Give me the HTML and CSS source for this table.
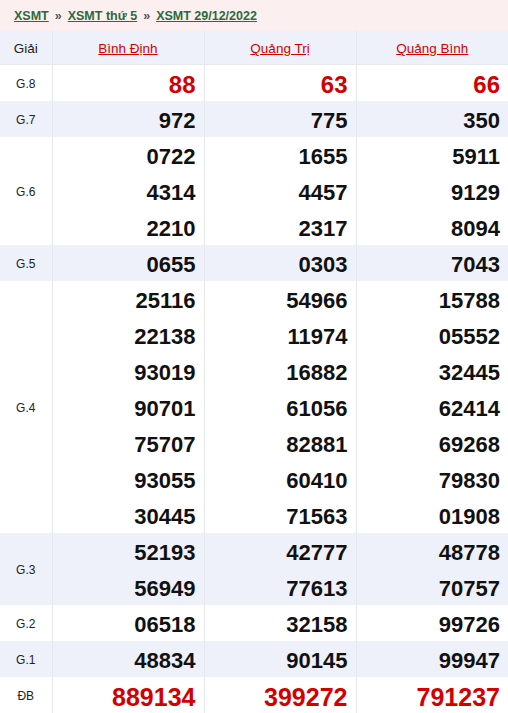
FILE: index.html
```html
<!DOCTYPE html>
<html>
<head>
<meta charset="utf-8">
<link rel="stylesheet" href="styles.css">
</head>
<body>
<div class="crumbs">
  <a href="#">XSMT</a><span class="sep">»</span><a href="#">XSMT thứ 5</a><span class="sep">»</span><a href="#">XSMT 29/12/2022</a>
</div>
<table class="kq">
  <colgroup><col class="c1"><col><col><col></colgroup>
  <thead>
    <tr><th>Giải</th><th><a href="#">Bình Định</a></th><th><a href="#">Quảng Trị</a></th><th><a href="#">Quảng Bình</a></th></tr>
  </thead>
  <tbody>
    <tr><td class="g">G.8</td><td class="red"><div>88</div></td><td class="red"><div>63</div></td><td class="red"><div>66</div></td></tr>
    <tr class="alt"><td class="g">G.7</td><td><div>972</div></td><td><div>775</div></td><td><div>350</div></td></tr>
    <tr><td class="g">G.6</td><td><div>0722</div><div>4314</div><div>2210</div></td><td><div>1655</div><div>4457</div><div>2317</div></td><td><div>5911</div><div>9129</div><div>8094</div></td></tr>
    <tr class="alt"><td class="g">G.5</td><td><div>0655</div></td><td><div>0303</div></td><td><div>7043</div></td></tr>
    <tr><td class="g">G.4</td>
      <td><div>25116</div><div>22138</div><div>93019</div><div>90701</div><div>75707</div><div>93055</div><div>30445</div></td>
      <td><div>54966</div><div>11974</div><div>16882</div><div>61056</div><div>82881</div><div>60410</div><div>71563</div></td>
      <td><div>15788</div><div>05552</div><div>32445</div><div>62414</div><div>69268</div><div>79830</div><div>01908</div></td></tr>
    <tr class="alt"><td class="g">G.3</td><td><div>52193</div><div>56949</div></td><td><div>42777</div><div>77613</div></td><td><div>48778</div><div>70757</div></td></tr>
    <tr><td class="g">G.2</td><td><div>06518</div></td><td><div>32158</div></td><td><div>99726</div></td></tr>
    <tr class="alt"><td class="g">G.1</td><td><div>48834</div></td><td><div>90145</div></td><td><div>99947</div></td></tr>
    <tr><td class="g">ĐB</td><td class="red db"><div>889134</div></td><td class="red db"><div>399272</div></td><td class="red db"><div>791237</div></td></tr>
  </tbody>
</table>
</body>
</html>
```
FILE: styles.css
```css
html, body {
  margin: 0;
  padding: 0;
  background: #fff;
  font-family: "Liberation Sans", Arial, sans-serif;
}
.crumbs {
  background: #fcefef;
  height: 31px;
  padding: 1px 0 0 14px;
  display: flex;
  align-items: center;
  font-size: 12.5px;
  font-weight: bold;
  box-sizing: border-box;
}
.crumbs a {
  color: #2b6a3e;
  text-decoration: underline;
}
.crumbs .sep {
  color: #555;
  margin: 0 6px;
}
.kq {
  width: 508px;
  border-collapse: collapse;
  table-layout: fixed;
}
.kq .c1 { width: 52px; }
.kq th, .kq td {
  border-left: 1px solid #e5e8ee;
  border-right: 1px solid #e5e8ee;
  padding: 0;
}
.kq th { border-bottom: 1px solid #e5e8ee; }
.kq th:first-child, .kq td:first-child { border-left: none; }
.kq th:last-child, .kq td:last-child { border-right: none; }
.kq thead tr {
  background: #eef1f9;
  height: 33px;
}
.kq th {
  font-size: 13.5px;
  font-weight: normal;
  color: #222;
  text-align: center;
  padding-top: 3px;
}
.kq th a {
  color: #d40000;
  text-decoration: underline;
}
.kq tr.alt { background: #eef1f9; }
.kq td.g {
  font-size: 12px;
  color: #222;
  text-align: center;
  padding-top: 2px;
}
.kq td div {
  font-size: 22px;
  font-weight: bold;
  color: #111;
  text-align: right;
  box-sizing: border-box;
  height: 36px;
  padding-top: 4px;
  line-height: 32px;
  padding-right: 8px;
}
.kq td.red div { color: #d40000; font-size: 24px; }
.kq td.db div { font-size: 25px; }
```
